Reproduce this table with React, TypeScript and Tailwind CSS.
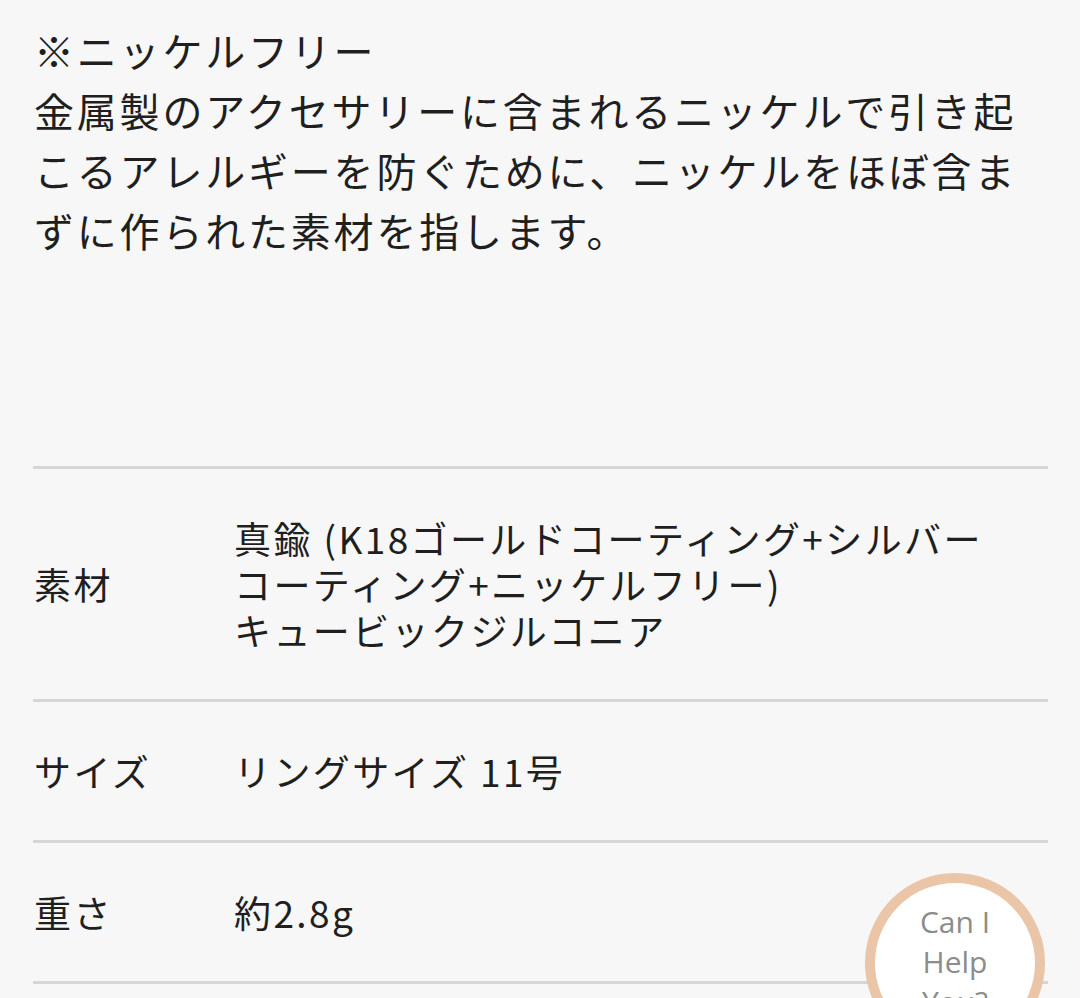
import React from 'react'

const rows: { label: string; lines: string[] }[] = [
  {
    label: '素材',
    lines: [
      '真鍮 (K18ゴールドコーティング+シルバー',
      'コーティング+ニッケルフリー)',
      'キュービックジルコニア',
    ],
  },
  { label: 'サイズ', lines: ['リングサイズ 11号'] },
  { label: '重さ', lines: ['約2.8g'] },
]

const note = [
  '※ニッケルフリー',
  '金属製のアクセサリーに含まれるニッケルで引き起',
  'こるアレルギーを防ぐために、ニッケルをほぼ含ま',
  'ずに作られた素材を指します。',
]

export default function App() {
  return (
    <div className="relative h-[998px] w-[1080px] overflow-hidden bg-[#f7f7f7] text-[#1f1f1f] [font-family:'Noto_Sans_CJK_JP','Noto_Sans',sans-serif]">
      <div className="pl-[33px] pr-[32px] pt-[20px]">
        <p className="pl-[1px] text-[40px] leading-[60px] tracking-[2.8px] whitespace-nowrap">
          {note.map((line) => (
            <span key={line} className="block">
              {line}
            </span>
          ))}
        </p>

        <div className="mt-[206px] border-t-[3px] border-[#d6d6d6]">
          {rows.map((row) => (
            <div
              key={row.label}
              className="flex items-center border-b-[3px] border-[#d6d6d6] py-[46px] text-[37px] leading-[46px] tracking-[2.4px]"
            >
              <div className="w-[201px] shrink-0 pl-[1px]">{row.label}</div>
              <div className="whitespace-nowrap">
                {row.lines.map((line) => (
                  <span key={line} className="block">
                    {line}
                  </span>
                ))}
              </div>
            </div>
          ))}
        </div>
      </div>

      {/* chat button */}
      <button className="absolute left-[865px] top-[873px] flex h-[180px] w-[180px] flex-col items-center justify-start rounded-full border-[10px] border-[#eac5a8] bg-white pt-[19px] text-[30px] leading-[40px] text-[#8c8c8c] [font-family:'Open_Sans',sans-serif]">
        <span>Can I</span>
        <span>Help</span>
        <span>You?</span>
      </button>
    </div>
  )
}
